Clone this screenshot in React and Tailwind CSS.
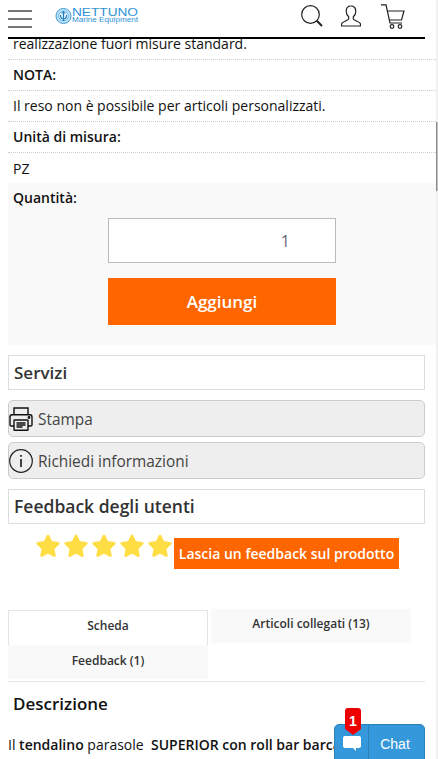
const Star = () => (
  <svg width="24" height="24" viewBox="0 0 24 24" className="shrink-0">
    <path
      d="M12 2.2 L15 8.6 L22 9.5 L16.9 14.3 L18.2 21.4 L12 18 L5.8 21.4 L7.1 14.3 L2 9.5 L9 8.6 Z"
      fill="#ffdd44"
      stroke="#ffdd44"
      strokeWidth="3"
      strokeLinejoin="round"
    />
  </svg>
);

const Logo = () => (
  <svg width="84" height="16" viewBox="0 0 84 16" className="block">
    <circle cx="8.500" cy="8" r="7.500" fill="#bfe2f5" stroke="#3a9ad9" strokeWidth="1" />
    <circle cx="8.500" cy="8" r="4.800" fill="#eaf6fc" stroke="#3a9ad9" strokeWidth="0.7" />
    <path d="M8.500 3v10M5.500 7c0 3 1 4 3 4s3-1 3-4M6.500 5h4" fill="none" stroke="#1b7fc2" strokeWidth="1.200" />
    <text x="17" y="8" fontFamily="Liberation Sans, sans-serif" fontSize="11" fill="#2f93d6" textLength="66" lengthAdjust="spacingAndGlyphs">NETTUNO</text>
    <text x="17" y="13.500" fontFamily="Liberation Sans, sans-serif" fontSize="6.500" fill="#2f93d6" textLength="66" lengthAdjust="spacingAndGlyphs">Marine Equipment</text>
  </svg>
);

const Row = ({ children, bold, last }) => (
  <div className={`px-[5px] flex items-center ${last ? 'h-[30px]' : 'h-[31px] pb-[2px] border-b border-dotted border-[#cccccc]'} ${bold ? 'font-semibold' : ''}`}>
    {children}
  </div>
);

export default function App() {
  return (
    <div className="h-[759px] w-[438px] overflow-hidden bg-white font-['Open_Sans',sans-serif] text-[14px] text-[#111111] relative">
      <header className="mx-2 w-[417px] h-[39px] border-b-2 border-black bg-white flex items-center relative z-10">
        <div className="w-[24px] flex flex-col gap-[6px]">
          <div className="h-[2px] bg-[#777777]" />
          <div className="h-[2px] bg-[#777777]" />
          <div className="h-[2px] bg-[#777777]" />
        </div>
        <div className="ml-[23px] mb-[5px]">
          <Logo />
        </div>
        <div className="ml-auto mr-[20px] flex items-start mb-[3px]">
          <svg width="22" height="22" viewBox="0 0 22 22" fill="none" stroke="#222222" strokeWidth="1.200">
            <circle cx="9.500" cy="9.500" r="8.800" />
            <path d="M15.800 15.800 L21 21" strokeWidth="2" />
          </svg>
          <svg width="20" height="22" viewBox="0 0 20 22" fill="none" stroke="#222222" strokeWidth="1.200" className="ml-[18px]">
            <path d="M10 1c-3.200 0-4.800 2.300-4.800 5.200 0 2.400 1 4.300 2.500 5.500v2.300c0 1-5 2.300-6.800 4.200-.5.600-.4 1.800-.4 2.800h19c0-1 .1-2.200-.4-2.800-1.800-1.900-6.800-3.200-6.800-4.200v-2.300c1.500-1.200 2.500-3.100 2.500-5.500C14.800 3.300 13.200 1 10 1z" />
          </svg>
          <svg width="24" height="25" viewBox="0 0 24 25" fill="none" stroke="#222222" strokeWidth="1.200" className="ml-[20px] -mt-[1px]">
            <path d="M0 .8h5L9 19h12" />
            <path d="M6 7h17l-2.500 9H8" />
            <circle cx="11" cy="22.500" r="1.800" />
            <circle cx="19" cy="22.500" r="1.800" />
          </svg>
        </div>
      </header>

      <main className="pl-2 w-[436px]">
        <div className="-mt-[10px]">
          <Row>realizzazione fuori misure standard.</Row>
          <Row bold>NOTA:</Row>
          <Row>Il reso non è possibile per articoli personalizzati.</Row>
          <Row bold>Unità di misura:</Row>
          <Row last>PZ</Row>
        </div>

        <section className="bg-[#f9f9f9] h-[162px]">
          <div className="h-[30px] px-[5px] pb-[2px] flex items-center font-semibold">Quantità:</div>
          <div className="ml-[100px] mt-[5px] w-[228px] h-[45px] bg-white border border-[#bbbbbb] flex items-center justify-end pr-[45px] text-[16px] text-[#666677]">
            1
          </div>
          <button className="ml-[100px] mt-[15px] w-[228px] h-[47px] bg-[#ff6600] text-white text-[17px] font-semibold">
            Aggiungi
          </button>
        </section>

        <div className="mt-[10px] w-[417px] h-[35px] border border-[#dddddd] px-[5px] flex items-center text-[17px] font-semibold text-[#333333]">
          Servizi
        </div>

        <div className="mt-[10px] w-[417px] flex flex-col gap-[5px] text-[15.4px]">
          <div className="h-[37px] bg-[#eeeeee] border border-[#cccccc] rounded-[5px] flex items-center gap-[5px] text-[#444444]">
            <svg width="24" height="24" viewBox="0 0 24 24" fill="none" stroke="#111111" strokeWidth="1.400" className="shrink-0">
              <path d="M5 7.500V1h14v6.500" />
              <path d="M5 19H2a1.200 1.200 0 0 1-1-1v-8c0-1.200 1-2.300 2-2.300h18c1 0 2 1.100 2 2.300v8a1.200 1.200 0 0 1-1 1h-3" />
              <rect x="5" y="13" width="14" height="10.300" rx="0.500" fill="#eeeeee" />
              <path d="M7.500 16h9M7.500 18h9M7.500 20h6" />
              <circle cx="20" cy="10.500" r="0.700" fill="#111111" />
            </svg>
            <span className="pt-[2px]">Stampa</span>
          </div>
          <div className="h-[37px] bg-[#eeeeee] border border-[#cccccc] rounded-[5px] flex items-center gap-[5px] text-[#444444]">
            <svg width="24" height="24" viewBox="0 0 24 24" fill="none" stroke="#222222" strokeWidth="1.200" className="shrink-0">
              <circle cx="12" cy="12" r="11.300" />
              <path d="M12 10v8" strokeWidth="1.700" />
              <path d="M12 6v1.700" strokeWidth="1.700" />
            </svg>
            <span className="pt-[2px]">Richiedi informazioni</span>
          </div>
        </div>

        <div className="mt-[10px] w-[417px] h-[35px] border border-[#dddddd] px-[5px] flex items-center text-[17.5px] font-semibold text-[#333333]">
          Feedback degli utenti
        </div>

        <div className="mt-[9px] ml-[28px] flex items-start">
          <div className="flex gap-[4px] mt-[1px]">
            <Star />
            <Star />
            <Star />
            <Star />
            <Star />
          </div>
          <div className="ml-[2px] mt-[5px] w-[225px] h-[31px] bg-[#ff6600] text-white font-semibold flex items-center justify-center">
            Lascia un feedback sul prodotto
          </div>
        </div>

        <div className="mt-[41px] grid grid-cols-[200px_200px] gap-x-[3px] text-[12px] font-semibold text-[#333333]">
          <div className="h-[35px] border border-b-0 border-[#e5e5e5] flex items-center justify-center pb-[4px]">Scheda</div>
          <div className="h-[34px] -mt-[1px] bg-[#f9f9f9] flex items-center justify-center pb-[4px]">Articoli collegati (13)</div>
          <div className="h-[34px] bg-[#f9f9f9] flex items-center justify-center pb-[2px]">Feedback (1)</div>
        </div>
        <div className="mt-[2px] border-t border-[#e5e5e5] w-[417px]" />

        <h2 className="mt-[11px] px-[5px] text-[17px] leading-[22px] font-semibold">Descrizione</h2>
        <p className="mt-[19px] whitespace-nowrap">
          Il <b className="font-semibold">tendalino</b> parasole &nbsp;<b className="font-semibold">SUPERIOR con roll bar barca</b>
        </p>
      </main>

      <div className="absolute right-0 top-0 w-[2px] h-full bg-[#f1f1f1]" />
      <div className="absolute right-0 top-[122px] w-[2px] h-[69px] bg-[#c1c1c1] border-l border-[#8a8a8a]" />

      <div className="absolute left-[334px] top-[724px] w-[91px] h-[40px] bg-[#3498db] border border-[#2a80b9] rounded-[5px] flex text-white font-['Liberation_Sans',sans-serif]">
        <div className="w-[34px] border-r border-[#2a80b9] flex items-start justify-center pt-[11px]">
          <svg width="18" height="15" viewBox="0 0 18 15">
            <path d="M2 0h14a2 2 0 0 1 2 2v8a2 2 0 0 1-2 2h-3v3l-3-3H2a2 2 0 0 1-2-2V2a2 2 0 0 1 2-2z" fill="#ffffff" />
          </svg>
        </div>
        <div className="flex-1 flex items-start justify-center pt-[9px] pr-[3px] text-[14px]">Chat</div>
      </div>
      <div className="absolute left-[345px] top-[708px] w-[16px] h-[21px] pt-[5px] bg-[#ee0000] rounded-t-[3px] flex items-center justify-center text-white text-[14px] font-bold font-['Liberation_Sans',sans-serif]">
        1
      </div>
      <div className="absolute left-[345px] top-[729px] w-0 h-0 border-x-[8px] border-x-transparent border-t-[6px] border-t-[#ee0000]" />
    </div>
  );
}
